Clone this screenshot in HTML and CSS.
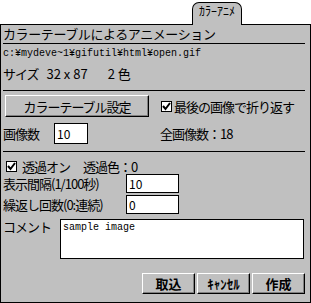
FILE: index.html
```html
<!DOCTYPE html>
<html>
<head>
  <title>カラーアニメ</title>
  <link rel="stylesheet" href="styles.css">
</head>
<body>
  <div class="window">
    <div class="tabs">
      <div class="tab">ｶﾗｰｱﾆﾒ</div>
    </div>
    <div class="panel">
      <div class="title">カラーテーブルによるアニメーション</div>
      <hr class="rule">
      <div class="path">c:¥mydeve~1¥gifutil¥html¥open.gif</div>
      <div class="size">サイズ <span class="num">32 x 87</span><span class="colors">2 色</span></div>
      <hr class="rule">

      <div class="row row-table">
        <button class="btn btn-wide">カラーテーブル設定</button>
        <label class="check check-loop">
          <span class="box"><svg width="9" height="9" viewBox="0 0 9 9"><path d="M1 4 L3.5 7 L8 1" fill="none" stroke="#000" stroke-width="2"/></svg></span>
          最後の画像で折り返す
        </label>
      </div>
      <div class="row row-count">
        <span class="label label-count">画像数</span>
        <input class="field field-count" type="text" value="10">
        <span class="total">全画像数：18</span>
      </div>
      <hr class="rule rule-low">

      <div class="row row-trans">
        <label class="check check-trans">
          <span class="box"><svg width="9" height="9" viewBox="0 0 9 9"><path d="M1 4 L3.5 7 L8 1" fill="none" stroke="#000" stroke-width="2"/></svg></span>
          透過オン
        </label>
        <span class="trans-color">透過色：0</span>
      </div>
      <div class="row row-field">
        <span class="label label-long">表示間隔(1/100秒)</span>
        <input class="field field-num" type="text" value="10">
      </div>
      <div class="row row-field row-loop">
        <span class="label label-long">繰返し回数(0:連続)</span>
        <input class="field field-num" type="text" value="0">
      </div>
      <div class="row row-comment">
        <span class="label label-comment">コメント</span>
        <textarea class="comment">sample image</textarea>
      </div>

      <div class="row actions">
        <button class="btn btn-action">取込</button>
        <button class="btn btn-action">ｷｬﾝｾﾙ</button>
        <button class="btn btn-action">作成</button>
      </div>
    </div>
  </div>
</body>
</html>
```
FILE: styles.css
```css
body {
  margin: 0;
  background: #fff;
  color: #000;
  font-family: "Noto Sans CJK JP", sans-serif;
  font-size: 13px;
  letter-spacing: -1px;
}
.window {
  width: 311px;
  height: 303px;
  display: flex;
  flex-direction: column;
}
.tabs {
  height: 24px;
  display: flex;
  justify-content: flex-end;
  align-items: flex-end;
  padding-right: 69px;
}
.tab {
  position: relative;
  z-index: 1;
  width: 50px;
  height: 23px;
  margin-bottom: -1px;
  box-sizing: border-box;
  border: 1px solid #000;
  border-bottom: 0;
  border-radius: 7px 7px 0 0;
  background: #c0c0c0;
  text-align: center;
  font-size: 12px;
  letter-spacing: 0;
  line-height: 14px;
  padding-top: 1px;
}
.panel {
  flex: 1;
  display: flex;
  flex-direction: column;
  border: 1px solid #000;
  background: #c0c0c0;
  padding: 0 5px 0 2px;
}
.title {
  height: 18px;
  line-height: 18px;
  letter-spacing: -0.4px;
}
.rule {
  margin: 0;
  height: 0;
  border: 0;
  border-top: 1px solid #000;
}
.path {
  height: 20px;
  line-height: 20px;
  font-family: "Liberation Mono", monospace;
  font-size: 10px;
  letter-spacing: 0;
}
.size {
  height: 20px;
  line-height: 20px;
  margin-bottom: 6px;
}
.size .num {
  margin-left: 6px;
  letter-spacing: 0;
}
.size .colors {
  margin-left: 20px;
  letter-spacing: 0;
}
.row {
  display: flex;
  align-items: center;
}
.btn {
  box-sizing: border-box;
  padding: 0;
  font-family: inherit;
  font-size: 13px;
  letter-spacing: -1px;
  color: #000;
  background: #c0c0c0;
  border: 1px solid;
  border-color: #fff #000 #000 #fff;
  box-shadow: inset -1px -1px 0 #808080;
}
.row-table {
  height: 22px;
  margin-top: 4px;
}
.btn-wide {
  width: 144px;
  height: 22px;
  margin-left: 2px;
}
.check {
  display: flex;
  align-items: center;
}
.box {
  width: 11px;
  height: 11px;
  box-sizing: border-box;
  border: 1px solid #000;
  background: #fff;
  display: flex;
  align-items: center;
  justify-content: center;
  margin-right: 2px;
}
.check-loop {
  margin-left: 12px;
}
.row-count {
  height: 21px;
  margin-top: 6px;
  margin-bottom: 7px;
}
.label-count {
  width: 51px;
}
.field {
  box-sizing: border-box;
  margin: 0;
  padding: 0 2px;
  border: 1px solid #000;
  background: #fff;
  font-family: inherit;
  font-size: 12px;
  letter-spacing: 0;
  color: #000;
  outline: none;
}
.field-count {
  width: 34px;
  height: 21px;
}
.total {
  margin-left: 72px;
}
.row-trans {
  height: 16px;
  margin-top: 6px;
}
.check-trans {
  margin-left: 3px;
}
.check-trans .box {
  margin-right: 5px;
}
.trans-color {
  margin-left: 13px;
}
.row-field {
  height: 19px;
}
.row-loop {
  margin-top: 2px;
}
.label-long {
  width: 123px;
}
.field-num {
  width: 53px;
  height: 19px;
}
.row-comment {
  align-items: flex-start;
  margin-top: 5px;
}
.label-comment {
  width: 57px;
  line-height: 16px;
}
.comment {
  box-sizing: border-box;
  width: 244px;
  height: 40px;
  margin: 0;
  padding: 2px 2px;
  border: 1px solid #000;
  background: #fff;
  resize: none;
  font-family: "Liberation Mono", monospace;
  font-size: 10px;
  letter-spacing: 0;
  line-height: 12px;
  color: #000;
  outline: none;
}
.actions {
  justify-content: flex-end;
  gap: 2px;
  margin-top: 14px;
}
.btn-action {
  width: 53px;
  height: 21px;
  font-weight: bold;
  letter-spacing: 0;
}
```
